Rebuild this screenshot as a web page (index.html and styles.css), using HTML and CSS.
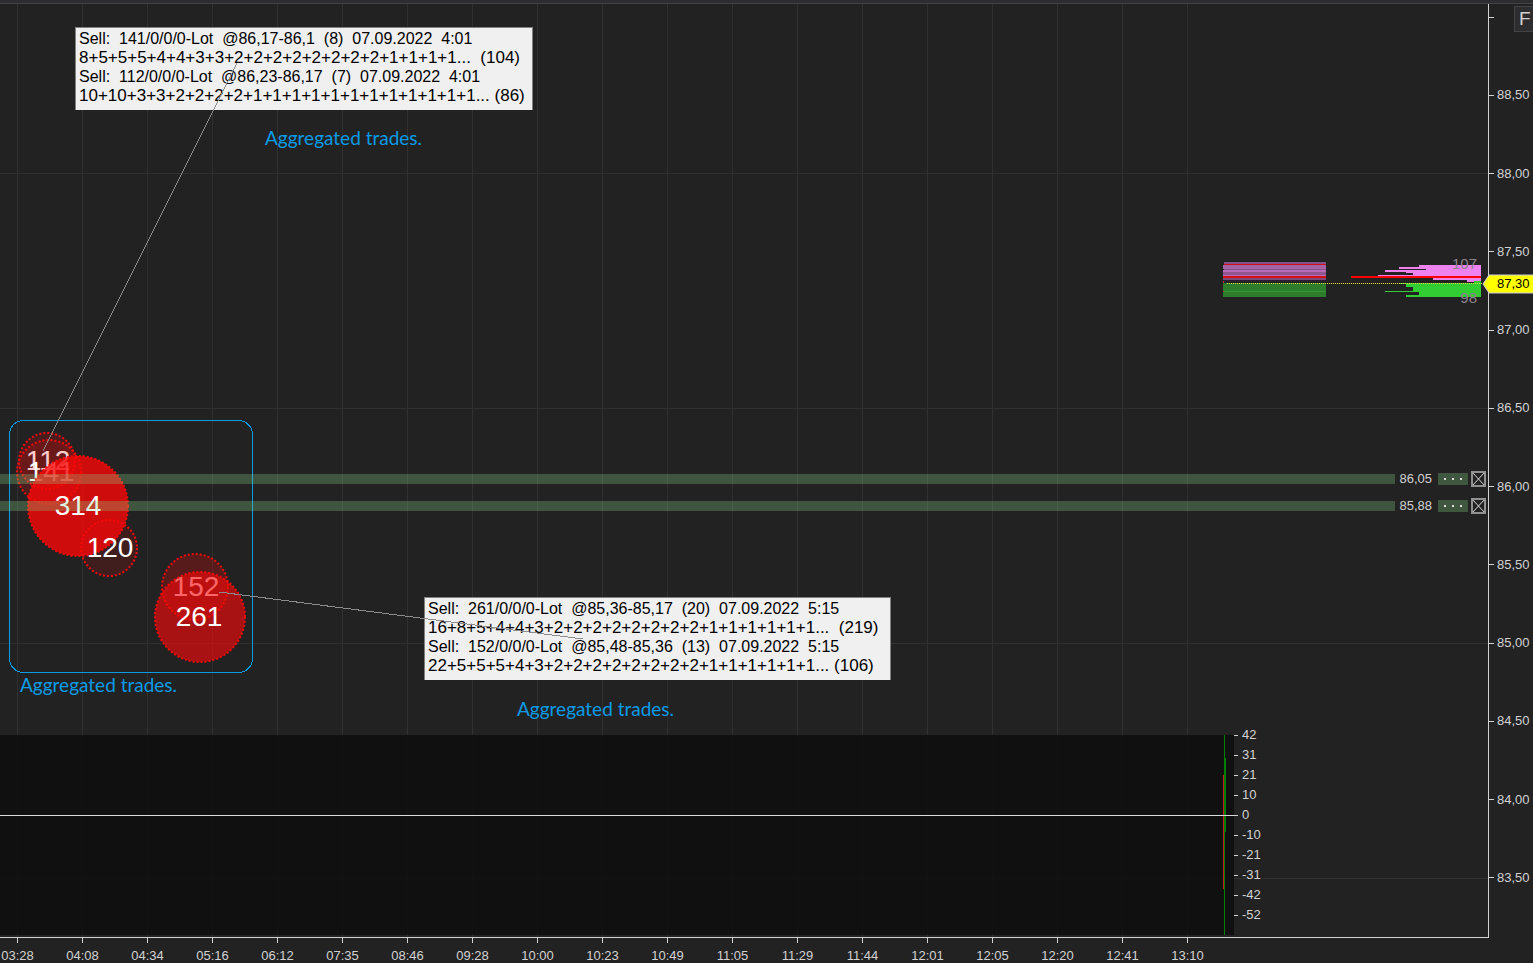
FILE: index.html
```html
<!DOCTYPE html>
<html lang="en">
<head>
<meta charset="utf-8">
<title>Aggregated trades chart</title>
<link rel="stylesheet" href="styles.css">
</head>
<body>
<main class="chart">
  <div class="topbar"></div>
  <section class="plot">
    <svg class="drawing">
      <g class="grid">
        <path d="M0 169.5H1488M0 404.5H1488M0 639.5H1488M0 874.5H1488"/>
        <path d="M17.5 0V933M82.5 0V933M147.5 0V933M212.5 0V933M277.5 0V933M342.5 0V933M407.5 0V933M472.5 0V933M537.5 0V933M602.5 0V933M667.5 0V933M732.5 0V933M797.5 0V933M862.5 0V933M927.5 0V933M992.5 0V933M1057.5 0V933M1122.5 0V933M1187.5 0V933"/>
      </g>
      <rect x="0" y="731" width="1234" height="200" fill="#0d0d0d" fill-opacity=".85"/>
      <rect x="1223" y="771" width="1" height="114" fill="#c81e1e"/>
      <rect x="1224" y="731" width="1" height="200" fill="#008000"/>
      <rect x="1224" y="754" width="2" height="74" fill="#008000"/>
      <path d="M0 811.5H1238" stroke="#dcdcdc"/>

      <rect x="9.5" y="416.5" width="243" height="252" rx="14" fill="none" stroke="#0a9be6"/>

      <g class="bubbles">
        <circle cx="47" cy="457" r="28" fill-opacity=".18"/>
        <text x="48" y="466">112</text>
        <circle cx="49" cy="468" r="32" fill-opacity=".2"/>
        <text x="51" y="477">141</text>
        <circle cx="78" cy="502" r="50" fill-opacity=".8"/>
        <text x="78" y="511">314</text>
        <circle cx="109" cy="544" r="28" fill-opacity=".14"/>
        <text x="110" y="553">120</text>
        <circle cx="195" cy="583" r="33" fill-opacity=".25"/>
        <text x="196" y="592">152</text>
        <circle cx="200" cy="613" r="45" fill-opacity=".62"/>
        <text x="199" y="622">261</text>
      </g>

      <g fill="#8cdc8c" fill-opacity=".28">
        <rect x="0" y="470" width="1395" height="10"/>
        <rect x="0" y="497" width="1395" height="10"/>
      </g>

      <g class="history">
        <rect x="1224" y="258" width="102" height="18" fill="#86508a"/>
        <rect x="1224" y="260" width="102" height="1" fill="#d20f14"/>
        <rect x="1223" y="261" width="103" height="4" fill="#a464a4"/>
        <rect x="1223" y="266" width="103" height="2" fill="#b86cb8"/>
        <rect x="1223" y="268" width="103" height="3" fill="#8f558f"/>
        <rect x="1223" y="271" width="103" height="1" fill="#b86cb8"/>
        <rect x="1223" y="272" width="103" height="2" fill="#d20f14"/>
        <rect x="1223" y="274" width="103" height="2" fill="#7a4a7a"/>
        <rect x="1223" y="276" width="103" height="2" fill="#2b1e2e"/>
        <rect x="1223" y="279" width="103" height="14" fill="#2d7d2d"/>
        <rect x="1223" y="287" width="103" height="1" fill="#329632"/>
        <rect x="1223" y="277" width="1" height="2" fill="#e01414"/>
        <rect x="1223" y="287" width="1" height="1" fill="#e01414"/>
      </g>
      <g class="depth">
        <path fill="#ee82ee" d="M1419 261H1481V278H1467V276H1433V274H1378V271H1413V269H1406V268H1385V266H1426V265H1399V263H1419Z"/>
        <rect x="1351" y="272" width="130" height="2" fill="#f00"/>
        <path fill="#32cd32" d="M1474 277H1481V293H1406V291H1419V288H1385V287H1413V283H1406V280H1400V279H1474Z"/>
        <text x="1477" y="265">107</text>
        <text x="1477" y="299">98</text>
        <path d="M1227 279.5H1483" stroke="#f0e03c" stroke-dasharray="1 1"/>
      </g>
    </svg>

    <div class="tip tip-top"><p>Sell:  141/0/0/0-Lot  @86,17-86,1  (8)  07.09.2022  4:01</p><p class="parts">8+5+5+5+4+4+3+3+2+2+2+2+2+2+2+2+1+1+1+1...  (104)</p><p>Sell:  112/0/0/0-Lot  @86,23-86,17  (7)  07.09.2022  4:01</p><p class="parts">10+10+3+3+2+2+2+2+1+1+1+1+1+1+1+1+1+1+1+1... (86)</p></div>
    <div class="tip tip-bottom"><p>Sell:  261/0/0/0-Lot  @85,36-85,17  (20)  07.09.2022  5:15</p><p class="parts">16+8+5+4+4+3+2+2+2+2+2+2+2+2+1+1+1+1+1+1...  (219)</p><p>Sell:  152/0/0/0-Lot  @85,48-85,36  (13)  07.09.2022  5:15</p><p class="parts">22+5+5+5+4+3+2+2+2+2+2+2+2+2+1+1+1+1+1+1... (106)</p></div>
    <svg class="drawing" aria-hidden="true">
      <path d="M43 447L237 59M219 588L583 635" stroke="#8c8c8c" fill="none"/>
    </svg>

    <p class="note note-top">Aggregated trades.</p>
    <p class="note note-left">Aggregated trades.</p>
    <p class="note note-bottom">Aggregated trades.</p>

    <ul class="volume-scale">
      <li>42</li><li>31</li><li>21</li><li>10</li><li>0</li><li>-10</li><li>-21</li><li>-31</li><li>-42</li><li>-52</li>
    </ul>

    <div class="level level-upper">
      <span>86,05</span>
      <button class="more" type="button" aria-label="Options for level 86,05"><svg width="20" height="2"><path d="M1 0h2v2h-2zM9 0h2v2h-2zM17 0h2v2h-2z" fill="#dcdcdc"/></svg></button>
      <button class="close" type="button" aria-label="Remove level 86,05"><svg width="15" height="16"><path d="M1 1L14 15M14 1L1 15" stroke="#dcdcdc"/><path d="M1 1H14V15H1Z" fill="none" stroke="#909090" stroke-width="2"/></svg></button>
    </div>
    <div class="level level-lower">
      <span>85,88</span>
      <button class="more" type="button" aria-label="Options for level 85,88"><svg width="20" height="2"><path d="M1 0h2v2h-2zM9 0h2v2h-2zM17 0h2v2h-2z" fill="#dcdcdc"/></svg></button>
      <button class="close" type="button" aria-label="Remove level 85,88"><svg width="15" height="16"><path d="M1 1L14 15M14 1L1 15" stroke="#dcdcdc"/><path d="M1 1H14V15H1Z" fill="none" stroke="#909090" stroke-width="2"/></svg></button>
    </div>
  </section>

  <aside class="price-axis">
    <ul class="prices">
      <li></li><li>88,50</li><li>88,00</li><li>87,50</li><li>87,00</li><li>86,50</li><li>86,00</li><li>85,50</li><li>85,00</li><li>84,50</li><li>84,00</li><li>83,50</li>
    </ul>
    <button class="fix" type="button">F</button>
    <div class="current">
      <svg width="52" height="20" aria-hidden="true"><path d="M1 10L7 1H52V19H7Z" fill="#ff0" stroke="#c8c8dc"/></svg>
      <span>87,30</span>
    </div>
  </aside>

  <footer class="time-axis">
    <ul class="times">
      <li>03:28</li><li>04:08</li><li>04:34</li><li>05:16</li><li>06:12</li><li>07:35</li><li>08:46</li><li>09:28</li><li>10:00</li><li>10:23</li><li>10:49</li><li>11:05</li><li>11:29</li><li>11:44</li><li>12:01</li><li>12:05</li><li>12:20</li><li>12:41</li><li>13:10</li>
    </ul>
  </footer>
</main>
</body>
</html>
```
FILE: styles.css
```css
* { box-sizing: border-box; }
body {
  margin: 0;
  background: #222;
  color: #d2d2d2;
  font: 13px/18px "Liberation Sans", Arial, sans-serif;
}
p, ul { margin: 0; padding: 0; list-style: none; }
button { padding: 0; border: 0; font: inherit; color: inherit; }
.chart {
  display: grid;
  grid-template: 4px minmax(0, 1fr) 26px / minmax(0, 1fr) 45px;
  height: 100vh;
  overflow: hidden;
}
.topbar { grid-column: 1 / -1; background: #2d2d30; border-bottom: 1px solid #434346; }
.plot { position: relative; overflow: hidden; }
.drawing { position: absolute; inset: 0; width: 100%; height: 100%; shape-rendering: crispEdges; }
.grid { stroke: #303030; }
.bubbles { font: 28px "Liberation Sans", sans-serif; text-anchor: middle; shape-rendering: auto; }
.bubbles circle { fill: #fa0808; stroke: #f80808; stroke-width: 2; stroke-dasharray: 2 2; }
.bubbles text { fill: #fff; }
.depth text { font: 15px "Liberation Sans", sans-serif; fill: #8c828c; text-anchor: end; }

.tip {
  position: absolute;
  padding: 1px 3px 5px;
  border: 1px solid #808080;
  border-bottom: 0;
  background: #f0f0f0;
  color: #000;
  font: 16px/19px "Liberation Sans", sans-serif;
  white-space: pre;
}
.tip .parts { font-size: 17px; }
.tip-top { left: 75px; top: 23px; width: 458px; }
.tip-bottom { left: 424px; top: 593px; width: 467px; }

.note { position: absolute; color: #0a9be6; font: 19px/24px Lato, sans-serif; white-space: nowrap; }
.note-top { left: 265px; top: 122px; }
.note-left { left: 20px; top: 669px; }
.note-bottom { left: 517px; top: 693px; }

.volume-scale { position: absolute; left: 1234px; top: 721px; line-height: 20px; }
.volume-scale li { display: flex; align-items: center; gap: 4px; }
.volume-scale li::before { content: ""; width: 4px; height: 1px; background: #d2d2d2; }

.level { position: absolute; right: 2px; display: flex; align-items: center; height: 16px; }
.level-upper { top: 467px; }
.level-lower { top: 494px; }
.more { display: flex; align-items: center; justify-content: center; width: 30px; height: 12px; margin: 0 3px 0 6px; background: #40573f; }
.close { display: flex; background: none; }

.price-axis { position: relative; border-left: 1px solid #d2d2d2; padding: 4px 0 50px; }
.prices { display: flex; flex-direction: column; justify-content: space-between; height: 100%; }
.prices li { display: flex; align-items: center; gap: 3px; height: 18px; }
.prices li::before { content: ""; width: 5px; height: 1px; background: #d2d2d2; }
.fix { position: absolute; left: 25px; top: 2px; width: 26px; height: 26px; border: 1px solid #434346; background: #2d2d30; font-size: 19px; text-align: left; padding-left: 4px; }
.current { position: absolute; left: -7px; top: 270px; color: #000; }
.current svg { display: block; }
.current span { position: absolute; left: 15px; top: 1px; }

.time-axis { grid-column: 1 / -1; background: linear-gradient(#d2d2d2, #d2d2d2) 0 0 / calc(100% - 44px) 1px no-repeat; }
.times { display: flex; margin-left: -15px; padding-top: 1px; }
.times li { flex: 0 0 65px; display: flex; flex-direction: column; align-items: center; }
.times li::before { content: ""; width: 1px; height: 5px; margin-bottom: 4px; background: #d2d2d2; }
```
